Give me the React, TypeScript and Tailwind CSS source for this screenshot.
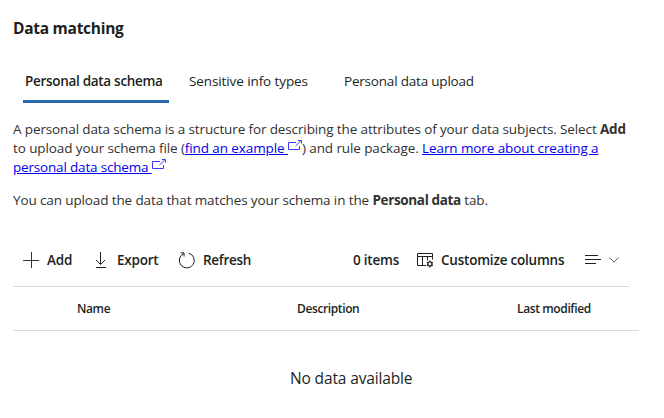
import type { ReactNode } from "react";

function ExternalIcon() {
  return (
    <svg className="inline-block align-[2px]" width="14" height="11" viewBox="0 0 14 11" fill="none" stroke="#3a3aff" strokeWidth="1">
      <path d="M8 2.5H.5v7h11V6M7.5 6 12.8.9M10 .5h3.5v3" />
    </svg>
  );
}

function Tab({ children, active, className }: { children: ReactNode; active?: boolean; className: string }) {
  return (
    <button
      className={`h-[43px] shrink-0 border-b-[3px] pt-[3px] whitespace-nowrap text-left ${active ? "border-[#2b67ad] font-semibold" : "border-transparent"} ${className}`}
    >
      {children}
    </button>
  );
}

export default function App() {
  return (
    <main className="h-[418px] w-[664px] overflow-hidden bg-white pl-[13px] font-['Open_Sans','Noto_Sans',sans-serif] text-[13.5px] text-[#201f1e]">
      <h1 className="h-[60px] pt-[17px] text-[15.5px] leading-[22px] font-bold tracking-[-0.27px]">Data matching</h1>
      <nav className="flex h-[43px] pl-[10px]">
        <Tab active className="w-[146px] pl-[2px] tracking-[-0.3px]">Personal data schema</Tab>
        <Tab className="ml-5 w-[155px] tracking-[-0.1px]">Sensitive info types</Tab>
        <Tab className="w-[150px] tracking-[-0.2px]">Personal data upload</Tab>
      </nav>
      <section className="pt-[17px] leading-[19px] tracking-[-0.1px] whitespace-nowrap text-[#323130]">
        <p className="h-[57px]">
          <span className="block h-[19px] tracking-[-0.12px]">
            A personal data schema is a structure for describing the attributes of your data subjects. Select <b className="tracking-[-0.2px]">Add</b>
          </span>
          <span className="block h-[19px]">
            to upload your schema file (<a className="text-[#0000ee] underline">find an example </a><ExternalIcon />) and rule package.{" "}
            <a className="text-[#0000ee] underline">Learn more about creating a</a>
          </span>
          <span className="block h-[19px] tracking-[-0.18px]">
            <a className="text-[#0000ee] underline">personal data schema </a><ExternalIcon />
          </span>
        </p>
        <p className="mt-[14px] h-[19px] tracking-[-0.12px]">
          You can upload the data that matches your schema in the <b className="tracking-[-0.35px]">Personal data</b> tab.
        </p>
      </section>
      <div className="mt-[24px] flex h-[53px] w-[616px] items-center border-b border-[#d9d9d9] pl-[10px] font-semibold tracking-[-0.22px] whitespace-nowrap">
        <button className="flex w-[71px] items-center gap-2">
          <svg width="16" height="16" viewBox="0 0 16 16" stroke="#323130" fill="none"><path d="M8.5 0v16M0 8.5h16" /></svg>
          <span className="pt-px">Add</span>
        </button>
        <button className="flex w-[84px] items-center gap-2">
          <svg width="15" height="16" viewBox="0 0 15 16" stroke="#201f1e" fill="none"><path d="M6.5 0v12M2 8l4.5 4.5L11 8M2 15.5h10" /></svg>
          <span className="pt-px">Export</span>
        </button>
        <button className="flex w-[175px] items-center gap-2 tracking-[-0.3px]">
          <svg width="17" height="17" viewBox="0 0 17 17" stroke="#201f1e" fill="none"><path d="M10.8 1.2A7.5 7.5 0 1 1 5.5 1.7M2.5.9h3.5v3.6" /></svg>
          <span className="pt-px">Refresh</span>
        </button>
        <span className="w-[64px] pt-px">0 items</span>
        <button className="flex w-[168px] items-center gap-[7px]">
          <svg width="17" height="16" viewBox="0 0 17 16" stroke="#201f1e" fill="none">
            <path d="M9 13.5H.5v-12h15v6M.5 4.5h15M5.5 4.5v9M10.5 4.5v4" />
            <circle cx="12.9" cy="12" r="2.1" strokeWidth="1.3" />
            <path d="M12.9 8.4v1.5M12.9 14.1v1.5M9.8 10.2l1.3.7M14.7 13l1.3.7M9.8 13.8l1.3-.7M14.7 11l1.3-.7" />
          </svg>
          <span className="pt-px">Customize columns</span>
        </button>
        <button className="flex items-center gap-2">
          <svg width="16" height="12" viewBox="0 0 16 12" stroke="#201f1e" fill="none"><path d="M0 1.5h13M0 5.5h16M0 9.5h11" /></svg>
          <svg width="10" height="6" viewBox="0 0 10 6" stroke="#51657a" fill="none"><path d="m.4.5 4.6 4.6L9.6.5" /></svg>
        </button>
      </div>
      <div className="flex h-11 w-[626px] items-center border-b border-[#d9d9d9] pl-16 text-[12px] font-semibold tracking-[-0.38px]">
        <span className="w-[220px]">Name</span>
        <span className="w-[220px]">Description</span>
        <span>Last modified</span>
      </div>
      <p className="mt-[35px] ml-[277px] text-[15.5px] leading-6 tracking-[-0.14px]">No data available</p>
    </main>
  );
}
